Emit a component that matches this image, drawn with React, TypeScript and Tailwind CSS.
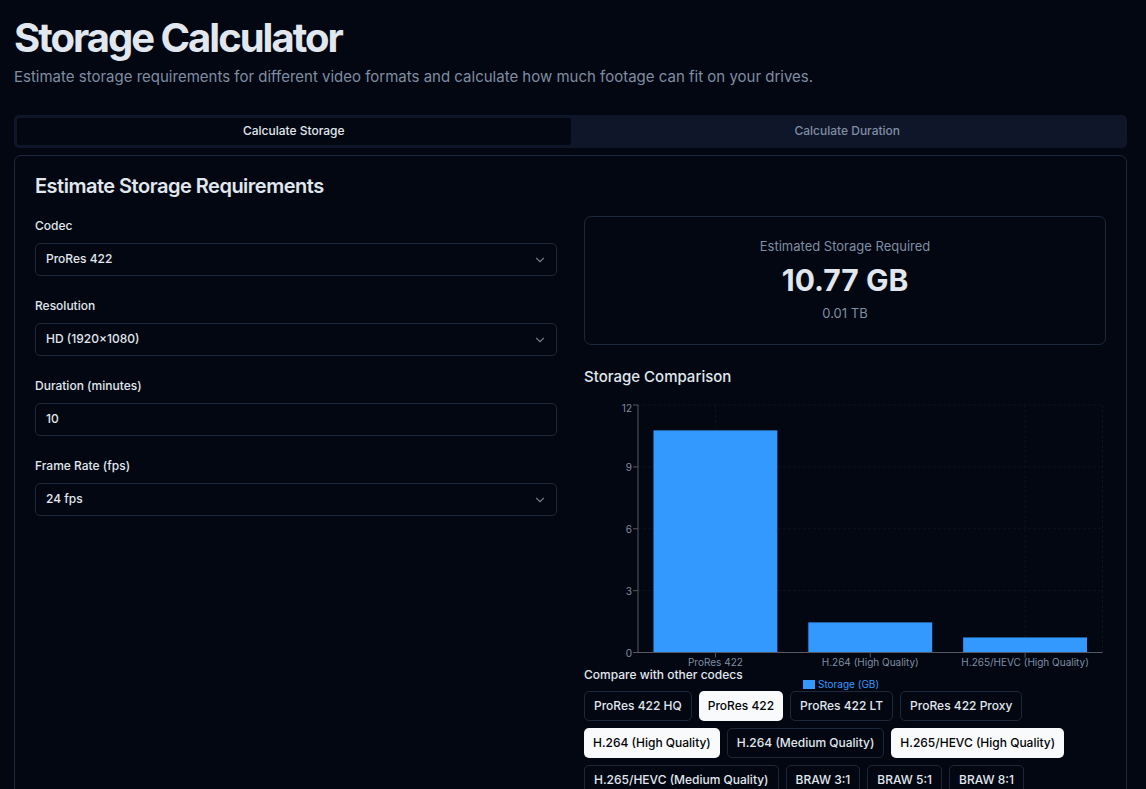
import { useState } from "react";
import type { ReactNode } from "react";
import { ChevronDown } from "lucide-react";

const codecs = [
  "ProRes 422 HQ",
  "ProRes 422",
  "ProRes 422 LT",
  "ProRes 422 Proxy",
  "H.264 (High Quality)",
  "H.264 (Medium Quality)",
  "H.265/HEVC (High Quality)",
  "H.265/HEVC (Medium Quality)",
  "BRAW 3:1",
  "BRAW 5:1",
  "BRAW 8:1",
];

const bars = [
  { name: "ProRes 422", value: 10.77 },
  { name: "H.264 (High Quality)", value: 1.46 },
  { name: "H.265/HEVC (High Quality)", value: 0.73 },
];

const plot = { left: 54, right: 518.5, top: 5, bottom: 252.5 };

function yOf(value: number) {
  return plot.bottom - (value / 12) * (plot.bottom - plot.top);
}

function Field({ id, label, children }: { id: string; label: string; children: ReactNode }) {
  return (
    <div className="flex flex-col gap-[7px]">
      <label htmlFor={id} className="text-xs leading-5 font-medium">
        {label}
      </label>
      {children}
    </div>
  );
}

function SelectField({ id, label, options }: { id: string; label: string; options: string[] }) {
  return (
    <Field id={id} label={label}>
      <div className="relative">
        <select
          id={id}
          className="h-[33px] w-full appearance-none rounded-[5px] border border-[#1d283a] bg-[#030711] px-2.5 pb-px text-xs font-medium"
        >
          {options.map((option) => (
            <option key={option}>{option}</option>
          ))}
        </select>
        <ChevronDown className="pointer-events-none absolute top-2.5 right-2.5 size-3.5 opacity-50" />
      </div>
    </Field>
  );
}

function Chart() {
  const step = (plot.right - plot.left) / bars.length;
  const ticks = [0, 3, 6, 9, 12];
  const columns = [plot.left + step * 0.5, plot.left + step * 2.5, plot.right];
  return (
    <svg viewBox="0 0 522 265" className="mt-[11px] block w-full overflow-visible" role="img" aria-label="Storage comparison">
      <g stroke="#0e131d" strokeDasharray="3 2">
        {ticks.map((t) => (
          <line key={t} x1={plot.left} x2={plot.right} y1={yOf(t)} y2={yOf(t)} />
        ))}
        {columns.map((x) => (
          <line key={x} x1={x} x2={x} y1={plot.top} y2={plot.bottom} />
        ))}
      </g>
      {bars.map((bar, i) => (
        <rect
          key={bar.name}
          x={plot.left + step * (i + 0.1)}
          y={yOf(bar.value)}
          width={step * 0.8}
          height={plot.bottom - yOf(bar.value)}
          fill="#3399ff"
        />
      ))}
      <g stroke="#55585e">
        <line x1={plot.left} x2={plot.left} y1={plot.top} y2={plot.bottom} />
        <line x1={plot.left} x2={plot.right} y1={plot.bottom} y2={plot.bottom} />
        {ticks.map((t) => (
          <line key={t} x1={plot.left - 5} x2={plot.left} y1={yOf(t)} y2={yOf(t)} />
        ))}
        {bars.map((bar, i) => (
          <line key={bar.name} x1={plot.left + step * (i + 0.5)} x2={plot.left + step * (i + 0.5)} y1={plot.bottom} y2={plot.bottom + 5} />
        ))}
      </g>
      <g fill="#7f8ea3" fontSize="10">
        {ticks.map((t) => (
          <text key={t} x={plot.left - 6} y={t === 12 ? 12 : yOf(t) + 4} textAnchor="end">
            {t}
          </text>
        ))}
        {bars.map((bar, i) => (
          <text key={bar.name} x={plot.left + step * (i + 0.5)} y="266" textAnchor="middle">
            {bar.name}
          </text>
        ))}
      </g>
      <rect x="219" y="280" width="12" height="9" fill="#3399ff" />
      <text x="234" y="288" fontSize="10" fill="#3399ff">
        Storage (GB)
      </text>
    </svg>
  );
}

export default function App() {
  const [tab, setTab] = useState("Calculate Storage");
  const [selected, setSelected] = useState(["ProRes 422", "H.264 (High Quality)", "H.265/HEVC (High Quality)"]);

  const toggle = (codec: string) =>
    setSelected((list) => (list.includes(codec) ? list.filter((c) => c !== codec) : [...list, codec]));

  return (
    <main className="min-h-screen bg-[#030711] pt-[18px] pr-[19px] pb-5 pl-3.5 font-['Inter',sans-serif] text-[#e1e7ef]">
      <h1 className="text-[40px] leading-10 font-bold tracking-tighter">Storage Calculator</h1>
      <p className="mt-[7px] text-[15px] leading-6 text-[#7f8ea3]">
        Estimate storage requirements for different video formats and calculate how much footage can fit on your drives.
      </p>

      <div role="tablist" className="mt-[26px] grid h-[33px] grid-cols-2 rounded-[5px] bg-[#0f1629] p-[3px]">
        {["Calculate Storage", "Calculate Duration"].map((name) => (
          <button
            key={name}
            role="tab"
            aria-selected={tab === name}
            onClick={() => setTab(name)}
            className={
              tab === name
                ? "rounded-[3px] bg-[#030711] pb-px text-xs font-medium"
                : "rounded-[3px] pb-px text-xs font-medium text-[#7f8ea3]"
            }
          >
            {name}
          </button>
        ))}
      </div>

      <section className="mt-[7px] rounded-[7px] border border-[#1d283a] p-5">
        <h2 className="text-xl leading-5 font-semibold tracking-tight">Estimate Storage Requirements</h2>
        <div className="mt-5 grid grid-cols-2 gap-[27px]">
          <div className="flex flex-col gap-5">
            <SelectField id="codec" label="Codec" options={["ProRes 422", "ProRes 422 HQ", "ProRes 422 LT"]} />
            <SelectField id="resolution" label="Resolution" options={["HD (1920×1080)", "UHD (3840×2160)"]} />
            <Field id="duration" label="Duration (minutes)">
              <input
                id="duration"
                type="text"
                inputMode="numeric"
                defaultValue="10"
                className="h-[33px] w-full rounded-[5px] border border-[#1d283a] bg-[#030711] px-2.5 pb-0.5 text-xs font-medium"
              />
            </Field>
            <SelectField id="fps" label="Frame Rate (fps)" options={["24 fps", "25 fps", "30 fps", "60 fps"]} />
          </div>

          <div>
            <div className="rounded-[7px] border border-[#1d283a] pt-[19px] pb-[21px] text-center">
              <p className="text-[13px] leading-5 text-[#7f8ea3]">Estimated Storage Required</p>
              <p className="mt-1.5 text-3xl leading-[37px] font-bold">10.77 GB</p>
              <p className="mt-1 text-[13px] leading-5 text-[#7f8ea3]">0.01 TB</p>
            </div>
            <h3 className="mt-5 text-[15px] leading-6 font-medium">Storage Comparison</h3>
            <Chart />
            <p className="text-xs leading-5 font-medium">Compare with other codecs</p>
            <div className="mt-1.5 flex flex-wrap gap-[7px]">
              {codecs.map((codec) => (
                <button
                  key={codec}
                  aria-pressed={selected.includes(codec)}
                  onClick={() => toggle(codec)}
                  className={
                    selected.includes(codec)
                      ? "h-[30px] rounded-[5px] bg-[#f8fafc] px-[9px] text-xs font-medium text-[#020205]"
                      : "h-[30px] rounded-[5px] border border-[#1d283a] px-[9px] text-xs font-medium"
                  }
                >
                  {codec}
                </button>
              ))}
            </div>
          </div>
        </div>
      </section>
    </main>
  );
}
